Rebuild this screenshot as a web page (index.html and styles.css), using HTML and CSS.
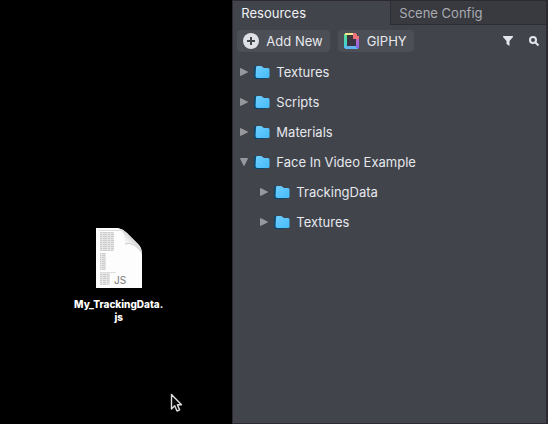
FILE: index.html
```html
<!DOCTYPE html>
<html lang="en">
<head>
<meta charset="utf-8">
<title>Resources</title>
<link rel="stylesheet" href="styles.css">
</head>
<body>
<svg class="defs" aria-hidden="true">
  <defs>
    <linearGradient id="folder-fill" x1="0" y1="0" x2="1" y2="1">
      <stop offset="0" stop-color="#6fceff"/>
      <stop offset="1" stop-color="#45bbfb"/>
    </linearGradient>
    <symbol id="folder" viewBox="0 0 16 14">
      <path d="M0 2.500Q0 1 1.500 1H6l2 2h3v11H2Q0 14 0 12z" fill="#0b4a70"/>
      <path d="M2 2.500Q2 1 3 1h4q.8 0 1.300.7L10 3H14Q15.500 3 15.500 4.500V11.500Q15.500 13 14 13H3.500Q1.500 13 1.500 11z" fill="url(#folder-fill)"/>
    </symbol>
    <symbol id="arrow" viewBox="0 0 10 10">
      <path d="M1.500 1.500v7L8.500 5z" fill="#96989d" stroke="#96989d" stroke-linejoin="round"/>
    </symbol>
  </defs>
</svg>
<div class="screen">
  <main class="desktop">
    <figure class="file">
      <svg class="file-icon" width="46" height="60" viewBox="0 0 46 60" aria-hidden="true">
        <defs>
          <linearGradient id="curl" x1="0" y1="1" x2="1" y2="0">
            <stop offset="0" stop-color="#fff"/>
            <stop offset=".45" stop-color="#f0f0f0"/>
            <stop offset="1" stop-color="#888"/>
          </linearGradient>
        </defs>
        <path d="M0 0H22Q27 1 31 5L43 17Q46 20 46 27V60H0z" fill="#fdfdfd"/>
        <path d="M22 0Q29 3 29 16Q39 13 46 25Q45 19 41 15L31 5Q27 1 22 0z" fill="url(#curl)"/>
        <path d="M29 16Q38 13 46 25" fill="none" stroke="#ccc"/>
        <g fill="#e6e6e6">
          <path d="M4 4h14v19H4zM4 25h6v17H4zM4 45h10v12H4z"/>
        </g>
        <g fill="none" stroke="#cbcbcb">
          <path d="M3 2.500H25" stroke="#ddd"/>
          <path d="M4 4.500H17M4 6.500H18M4 8.500H18M4 10.500H17M4 12.500H18M4 14.500H18M4 16.500H17M4 18.500H18M4 20.500H18M4 22.500H17" stroke-dasharray="2 1 4 1"/>
          <path d="M4 25.500h6M4 27.500h5M4 29.500h6M4 31.500h6M4 33.500h5M4 35.500h6M4 37.500h6M4 39.500h5M4 41.500h6" stroke-dasharray="1 1 3 1"/>
          <path d="M4 44.500H20" stroke="#ddd"/>
          <path d="M4 46.500h9M4 48.500h10M4 50.500h9M4 52.500h10M4 54.500h10M4 56.500h8" stroke-dasharray="2 1 3 1"/>
        </g>
        <text x="18" y="56" class="file-type">JS</text>
      </svg>
      <figcaption class="file-name">My_TrackingData.<br>js</figcaption>
    </figure>
    <svg class="cursor" width="13" height="20" viewBox="0 0 13 20" aria-hidden="true">
      <path d="M1.500 1.500V16L4.700 12.800L7 18L9.600 16.900L7.400 11.800H11.500z" fill="#080808" stroke="#ddd" stroke-width="1.400" stroke-linejoin="round"/>
    </svg>
  </main>
  <aside class="panel">
    <div class="tabs" role="tablist">
      <button class="tab tab-active" role="tab" aria-selected="true">Resources</button>
      <button class="tab" role="tab" aria-selected="false">Scene Config</button>
    </div>
    <div class="toolbar">
      <button class="action">
        <svg width="16" height="16" viewBox="0 0 16 16" aria-hidden="true">
          <circle cx="8" cy="8" r="8" fill="#dfe1e7"/>
          <path d="M8 4v8M4 8h8" stroke="#43474e" stroke-width="2"/>
        </svg>
        Add New
      </button>
      <button class="action">
        <svg width="16" height="16" viewBox="0 0 16 16" aria-hidden="true">
          <defs>
            <linearGradient id="giphy-left" x1="0" y1="0" x2="0" y2="1">
              <stop offset="0" stop-color="#58e08c"/>
              <stop offset="1" stop-color="#3cc9e6"/>
            </linearGradient>
            <linearGradient id="giphy-right" x1="0" y1="0" x2="0" y2="1">
              <stop offset="0" stop-color="#c668b8"/>
              <stop offset="1" stop-color="#8468ec"/>
            </linearGradient>
          </defs>
          <path d="M3 2H10L13 6V14H3z" fill="#3c3540"/>
          <path d="M0 1h3v14H0z" fill="url(#giphy-left)"/>
          <path d="M1 13h13v3H1z" fill="#62b4ef"/>
          <path d="M12 5h3v10h-3z" fill="url(#giphy-right)"/>
          <path d="M1 0h8v2H1z" fill="#f3e98c"/>
          <path d="M9 0h3v1h1v2h2v3H9z" fill="#ee7277"/>
        </svg>
        GIPHY
      </button>
      <button class="tool tool-first" aria-label="Filter">
        <svg width="12" height="12" viewBox="0 0 12 12" aria-hidden="true">
          <path d="M1 1H11V2L7.500 6V11L4.500 9V6L1 2z" fill="#e3e5ea"/>
        </svg>
      </button>
      <button class="tool" aria-label="Search">
        <svg width="12" height="12" viewBox="0 0 12 12" fill="none" stroke="#e3e5ea" aria-hidden="true">
          <circle cx="5" cy="5" r="3" stroke-width="2"/>
          <path d="M7.500 7.500L10.500 10.500" stroke-width="2"/>
        </svg>
      </button>
    </div>
    <ul class="tree" role="tree">
      <li role="treeitem"><div class="row"><svg class="arrow"><use href="#arrow"/></svg><svg class="folder"><use href="#folder"/></svg>Textures</div></li>
      <li role="treeitem"><div class="row"><svg class="arrow"><use href="#arrow"/></svg><svg class="folder"><use href="#folder"/></svg>Scripts</div></li>
      <li role="treeitem"><div class="row"><svg class="arrow"><use href="#arrow"/></svg><svg class="folder"><use href="#folder"/></svg>Materials</div></li>
      <li role="treeitem" aria-expanded="true">
        <div class="row"><svg class="arrow arrow-open"><use href="#arrow"/></svg><svg class="folder"><use href="#folder"/></svg>Face In Video Example</div>
        <ul class="branch" role="group">
          <li role="treeitem"><div class="row"><svg class="arrow"><use href="#arrow"/></svg><svg class="folder"><use href="#folder"/></svg>TrackingData</div></li>
          <li role="treeitem"><div class="row"><svg class="arrow"><use href="#arrow"/></svg><svg class="folder"><use href="#folder"/></svg>Textures</div></li>
        </ul>
      </li>
    </ul>
  </aside>
</div>
</body>
</html>
```
FILE: styles.css
```css
* {
  box-sizing: border-box;
}

body {
  margin: 0;
  background: #000;
  color: #e6e8ed;
  font: 13px/18px Inter, "Liberation Sans", sans-serif;
}

button {
  border: 0;
  padding: 0;
  background: none;
  color: inherit;
  font: inherit;
}

svg {
  display: block;
  flex: none;
}

ul {
  margin: 0;
  padding: 0;
  list-style: none;
}

.defs {
  position: absolute;
  width: 0;
  height: 0;
}

.screen {
  display: grid;
  grid-template-columns: 42.4% 1fr;
  min-height: 100vh;
}

.desktop {
  position: relative;
}

.file {
  display: flex;
  flex-direction: column;
  align-items: center;
  gap: 10px;
  margin: 228px 0 0 5px;
}

.file-type {
  fill: #777;
  font: 10px Inter, sans-serif;
}

.file-name {
  color: #fff;
  font-size: 10px;
  line-height: 13px;
  font-weight: 800;
  text-align: center;
}

.cursor {
  position: absolute;
  left: 170px;
  top: 393px;
}

.panel {
  border: solid #2c2930;
  border-width: 1px 2px 1px 1px;
  background: #41444b;
}

.tabs {
  display: grid;
  grid-template-columns: 157px 1fr;
  height: 24px;
}

.tab {
  padding: 0 8px;
  border: solid #2c2e33;
  border-width: 0 0 1px 1px;
  background: #383a40;
  color: #a9abb1;
  text-align: left;
}

.tab-active {
  border: 0;
  background: none;
  color: #f1f2f5;
}

.toolbar {
  display: flex;
  align-items: center;
  gap: 8px;
  padding: 5px 6px 5px 4px;
}

.action {
  display: flex;
  align-items: center;
  gap: 7px;
  height: 22px;
  padding: 0 7px 0 6px;
  border-radius: 4px;
  background: #4c4f56;
}

.tool {
  padding: 0;
}

.tool-first {
  margin: 0 6px 0 auto;
}

.row {
  display: flex;
  align-items: center;
  height: 30px;
  padding-left: 6px;
}

.arrow {
  width: 10px;
  height: 10px;
  margin-right: 5px;
}

.arrow-open {
  transform: rotate(90deg);
}

.folder {
  width: 16px;
  height: 14px;
  margin-right: 6px;
}

.branch {
  padding-left: 20px;
}
```
